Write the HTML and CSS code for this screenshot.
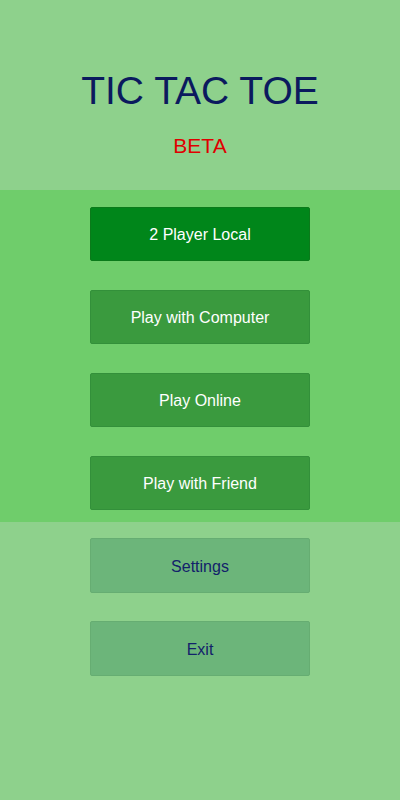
FILE: index.html
```html
<!DOCTYPE html>
<html lang="en">
<head>
  <meta charset="UTF-8">
  <meta name="viewport" content="width=device-width, initial-scale=1.0">
  <title>Tic Tac Toe</title>
  <link rel="stylesheet" href="styles.css">
</head>
<body>
  <header class="header">
    <h1 class="title">TIC TAC TOE</h1>
    <p class="beta">BETA</p>
  </header>

  <section class="modes">
    <button class="btn btn-active">2 Player Local</button>
    <button class="btn">Play with Computer</button>
    <button class="btn">Play Online</button>
    <button class="btn">Play with Friend</button>
  </section>

  <section class="extras">
    <button class="btn btn-soft">Settings</button>
    <button class="btn btn-soft">Exit</button>
  </section>
</body>
</html>
```
FILE: styles.css
```css
* {
  box-sizing: border-box;
}
body {
  margin: 0;
  width: 400px;
  height: 800px;
  background: #8ed18c;
  font-family: 'Liberation Sans', Arial, sans-serif;
  display: flex;
  flex-direction: column;
}
.header {
  height: 190px;
  padding-top: 69px;
  text-align: center;
}
.title {
  margin: 0;
  font-size: 39px;
  line-height: 44px;
  font-weight: normal;
  color: #0b1a5e;
}
.beta {
  margin: 21px 0 0;
  font-size: 21px;
  line-height: 24px;
  color: #e00000;
}
.modes {
  background: #6fcd6b;
  padding: 17px 0 12px;
  display: flex;
  flex-direction: column;
  align-items: center;
  gap: 29px;
}
.extras {
  padding-top: 16px;
  display: flex;
  flex-direction: column;
  align-items: center;
  gap: 28px;
}
.btn {
  width: 220px;
  height: 54px;
  border: 1px solid #33903a;
  border-radius: 2px;
  background: #3a9a3e;
  color: #fff;
  font-family: inherit;
  font-size: 16px;
  padding: 2px 0 0;
  cursor: pointer;
}
.btn-active {
  background: #00861a;
  border-color: #0a7a1a;
}
.btn-soft {
  height: 55px;
  background: #6cb57a;
  border-color: #66ad72;
  color: #12226a;
}
```
